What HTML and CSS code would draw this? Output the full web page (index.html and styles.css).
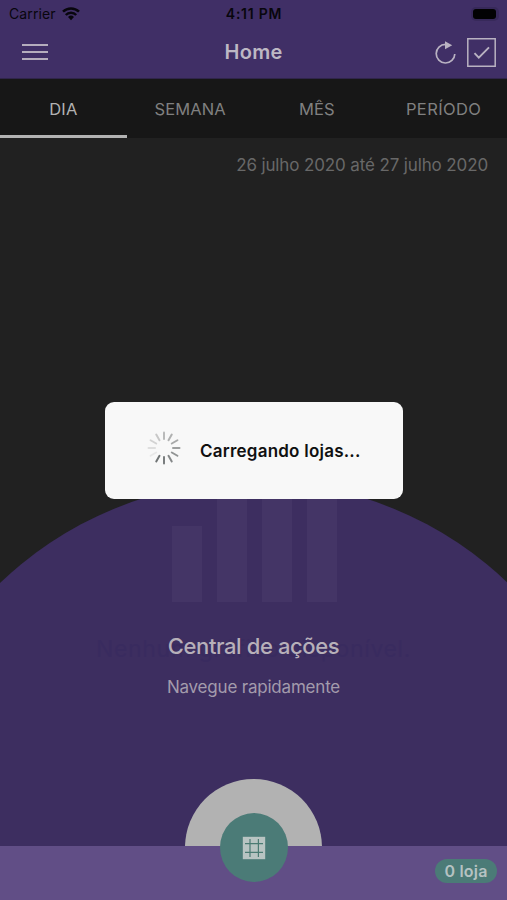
FILE: index.html
```html
<!DOCTYPE html>
<html lang="pt">
<head>
<meta charset="utf-8">
<title>Home</title>
<link rel="stylesheet" href="styles.css">
</head>
<body>
<div class="screen">
  <header class="top">
    <div class="status">
      <div class="carrier"><span class="carrier-name">Carrier</span>
        <svg width="18" height="14" viewBox="0 0 18 14" fill="none" stroke="#08060d" stroke-width="2.5"><path d="M1 4.7a11.5 11.5 0 0 1 16 0M3.8 8a7.2 7.2 0 0 1 10.4 0"/><path d="M6 10a4.4 4.4 0 0 1 6 0L9 13.2z" fill="#08060d" stroke="none"/></svg>
      </div>
      <span class="clock">4:11 PM</span>
      <div class="battery"><div class="charge"></div></div>
    </div>
    <nav class="bar">
      <div class="menu"><i></i><i></i><i></i></div>
      <h1 class="title">Home</h1>
      <div class="tools">
        <svg width="22" height="24" viewBox="0 0 22 24" fill="none" stroke="#b9b2c2" stroke-width="1.7"><path d="M11.5 3.4a9.3 9.3 0 1 0 9.3 9.6"/><path d="M11 .2L18.2 4.2L11 8.2z" fill="#b9b2c2" stroke="none"/></svg>
        <svg width="29" height="29" viewBox="0 0 29 29" fill="none" stroke="#b9b2c2" stroke-width="1.5"><path d="M.8.8h27.4v27.4H.8z"/><path d="M7.5 15.2l4.3 4.5L22 9.4" stroke-width="1.9"/></svg>
      </div>
    </nav>
  </header>
  <div class="tabs">
    <div class="tab active">DIA</div>
    <div class="tab">SEMANA</div>
    <div class="tab">MÊS</div>
    <div class="tab">PERÍODO</div>
  </div>
  <main class="content">
    <div class="range"><span class="range-text">26 julho 2020 até 27 julho 2020</span></div>
    <div class="dome"></div>
    <div class="bars"><i class="short"></i><i></i><i></i><i></i></div>
    <div class="empty">Nenhum gráfico disponível.</div>
    <div class="central">
      <h2 class="heading">Central de ações</h2>
      <p class="sub">Navegue rapidamente</p>
    </div>
    <div class="half"></div>
  </main>
  <footer class="foot">
    <div class="action"><svg width="24" height="24" viewBox="0 0 24 24"><path d="M.8.8h22.4v22.4H.8z" fill="#b8c4c2"/><path d="M8 3v18M16.4 3v18M3 7.6h18M3 16.4h18" stroke="#4b7b73" stroke-width="1.2"/></svg></div>
    <div class="badge"><span class="badge-text">0 loja</span></div>
  </footer>
  <div class="dialog">
    <svg class="spinner" width="36" height="36" viewBox="-18 -18 36 36" stroke-width="2" stroke-linecap="round">
      <path d="M0-9V-15.5" stroke="#b9baba"/><path d="M0-9V-15.5" stroke="#b0b1b1" transform="rotate(30)"/><path d="M0-9V-15.5" stroke="#a8a9a9" transform="rotate(60)"/><path d="M0-9V-15.5" stroke="#9d9f9f" transform="rotate(90)"/><path d="M0-9V-15.5" stroke="#929595" transform="rotate(120)"/><path d="M0-9V-15.5" stroke="#858889" transform="rotate(150)"/><path d="M0-9V-15.5" stroke="#797d7e" transform="rotate(180)"/><path d="M0-9V-15.5" stroke="#707475" transform="rotate(210)"/><path d="M0-9V-15.5" stroke="#e8e8e8" transform="rotate(240)"/><path d="M0-9V-15.5" stroke="#dedede" transform="rotate(270)"/><path d="M0-9V-15.5" stroke="#d3d3d3" transform="rotate(300)"/><path d="M0-9V-15.5" stroke="#c8c8c8" transform="rotate(330)"/>
    </svg>
    <span class="loading">Carregando lojas...</span>
  </div>
</div>
</body>
</html>
```

FILE: styles.css
```css
* { box-sizing: border-box; }
body { margin: 0; font-family: Inter, "Liberation Sans", sans-serif; }
h1, h2, p { margin: 0; }
.screen { position: relative; width: 507px; height: 900px; overflow: hidden; display: flex; flex-direction: column; background: #212121; }
.top { height: 79px; background: #402f66; border-bottom: 1px solid #30254a; }
.status { height: 27px; display: grid; grid-template-columns: 1fr auto 1fr; align-items: center; padding: 0 8px 0 9px; color: #08060d; }
.carrier { display: flex; align-items: center; gap: 6px; font-size: 14px; }
.carrier-name { letter-spacing: .1px; }
.clock { font-size: 14px; font-weight: 600; letter-spacing: .75px; }
.battery { justify-self: end; width: 28px; height: 14px; padding: 2px; border-radius: 5px; background: #37295a; }
.charge { width: 23px; height: 10px; border-radius: 3px; background: #020203; }
.bar { height: 50px; display: grid; grid-template-columns: 1fr auto 1fr; align-items: center; padding: 0 11px 0 22px; }
.menu { width: 26px; display: flex; flex-direction: column; gap: 5px; }
.menu i { height: 2px; background: #b5adbd; }
.title { margin-left: -11px; font-size: 20px; font-weight: 600; letter-spacing: .3px; color: #bdb8c4; }
.tools { justify-self: end; display: flex; align-items: center; gap: 11px; margin-top: 1px; }
.tabs { height: 59px; display: flex; background: #171717; }
.tab { flex: 1; display: flex; align-items: center; justify-content: center; padding-top: 3px; font-size: 16.5px; letter-spacing: .1px; color: #808080; border-bottom: 3px solid transparent; }
.tab:last-child { letter-spacing: .4px; }
.tab.active { color: #b2b2b2; border-color: #b2b2b2; }
.content { position: relative; height: 708px; overflow: hidden; }
.range { display: flex; justify-content: flex-end; padding: 16px 19px 0 0; font-size: 17px; letter-spacing: -.13px; line-height: 22px; color: #686868; }
.dome { position: absolute; left: 50%; top: 343px; width: 734px; height: 734px; margin-left: -367px; border-radius: 50%; background: #3d2e60; }
.bars { position: absolute; left: 172px; top: 352px; height: 112px; display: flex; align-items: flex-end; gap: 15px; }
.bars i { width: 30px; height: 112px; background: #443566; }
.bars .short { height: 76px; }
.empty { position: absolute; left: 96px; top: 497px; width: 320px; white-space: nowrap; font-size: 23px; letter-spacing: .65px; line-height: 28px; color: #392b5f; }
.central { position: absolute; left: 0; right: 0; top: 493px; text-align: center; }
.heading { font-size: 22px; line-height: 30px; font-weight: 500; letter-spacing: -.4px; color: #b7b0b9; }
.sub { margin-top: 15px; font-size: 17px; line-height: 22px; letter-spacing: -.2px; color: #a39bac; }
.half { position: absolute; left: 185px; top: 641px; width: 137px; height: 137px; border-radius: 50%; background: #b2b2b2; }
.foot { position: relative; height: 54px; background: #614e86; }
.action { position: absolute; left: 220px; top: -33px; width: 68px; height: 69px; border-radius: 50%; background: #4b7b77; display: flex; align-items: center; justify-content: center; }
.badge { margin: 13px 10px 0 auto; width: 62px; height: 24px; border-radius: 12px; background: #4b7b77; color: #b5c2c2; font-size: 16px; font-weight: 600; letter-spacing: .2px; display: flex; align-items: center; justify-content: center; }
.dialog { position: absolute; left: 105px; top: 402px; width: 298px; height: 97px; border-radius: 9px; background: #f8f8f8; display: flex; align-items: center; padding-left: 41px; gap: 18px; }
.spinner { margin-top: -6px; }
.loading { font-size: 17px; font-weight: 600; letter-spacing: .23px; color: #101010; white-space: nowrap; }
```
